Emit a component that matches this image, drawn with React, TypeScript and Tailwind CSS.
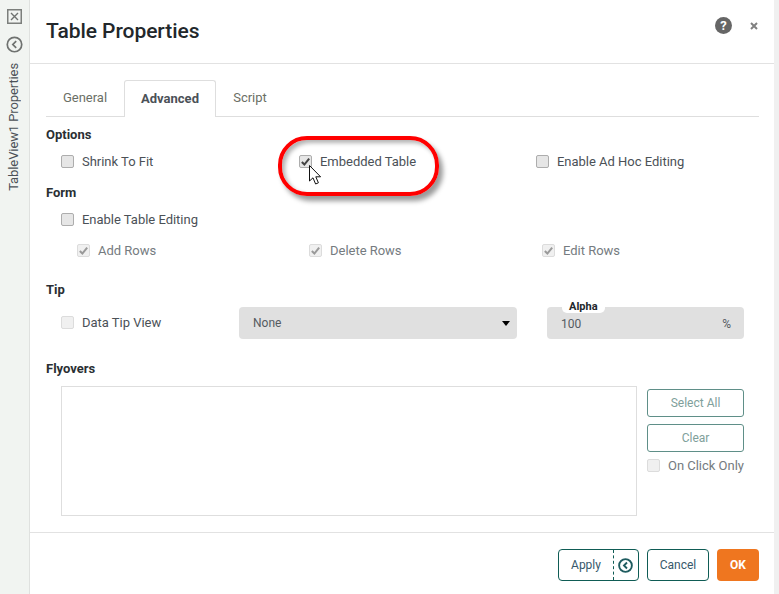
const roboto = "font-['Roboto',sans-serif]";

const Box = ({ checked = false, faded = false }: { checked?: boolean; faded?: boolean }) => (
  <span className={`flex h-[13px] w-[13px] shrink-0 items-center justify-center rounded-[2px] border ${faded ? "border-[#dcdcdc] bg-[#f0f0f0]" : "border-[#adadad] bg-[#e6e6e6]"}`}>
    {checked && (
      <svg viewBox="0 0 12 12" className="h-[11px] w-[11px]">
        <path d="M2 6.5 L4.8 9.3 L10 2.8" fill="none" stroke={faded ? "#9a9a9a" : "#444"} strokeWidth="2.2" />
      </svg>
    )}
  </span>
);

const Check = ({ label, checked, faded, gap = "gap-2", className = "" }: { label: string; checked?: boolean; faded?: boolean; gap?: string; className?: string }) => (
  <div className={`flex items-center ${gap} ${className}`}>
    <Box checked={checked} faded={faded} />
    <span className={`text-[13px] leading-none tracking-[-0.02px] ${faded ? "text-[#757b80]" : "text-[#4b5157]"}`}>{label}</span>
  </div>
);

const SectionLabel = ({ children, className = "" }: { children: string; className?: string }) => (
  <div className={`text-[13px] font-bold leading-none text-[#2a2f33] ${className}`}>{children}</div>
);

const BackIcon = ({ size, color, width = 1.6 }: { size: number; color: string; width?: number }) => (
  <svg width={size} height={size} viewBox="0 0 16 16">
    <circle cx="8" cy="8" r="6.8" fill="none" stroke={color} strokeWidth={width} />
    <path d="M9.6 4.8 L6.4 8 L9.6 11.2" fill="none" stroke={color} strokeWidth={width} />
  </svg>
);

export default function App() {
  return (
    <div className={`relative flex h-[594px] w-[779px] overflow-hidden bg-white ${roboto}`}>
      {/* collapsed side panel */}
      <aside className="flex w-[30px] shrink-0 flex-col items-center border-r border-[#dfe1df] bg-[#f1f4f1] pt-[9px]">
        <svg width="15" height="15" viewBox="0 0 15 15">
          <rect x="0.75" y="0.75" width="13.5" height="13.5" fill="none" stroke="#7c7f7c" strokeWidth="1.5" />
          <path d="M4 4 L11 11 M11 4 L4 11" stroke="#6f7270" strokeWidth="1.4" />
        </svg>
        <div className="mt-[12px] flex">
          <BackIcon size={17} color="#6f7270" />
        </div>
        <div className="mr-[2px] mt-[10px] rotate-180 text-[13px] leading-none tracking-[-0.1px] text-[#4b5157] [writing-mode:vertical-rl]">TableView1 Properties</div>
      </aside>

      <main className="flex w-[744px] shrink-0 flex-col">
        <header className="flex h-[64px] shrink-0 items-center justify-between border-b border-[#e2e2e2] pl-4 pr-4">
          <h1 className="pb-[1px] text-[21px] font-medium leading-none tracking-[-0.05px] text-[#22272b]">Table Properties</h1>
          <div className="mb-[12px] flex items-center gap-[18px]">
            <span className="flex h-[17px] w-[17px] items-center justify-center rounded-full bg-[#666] text-[13px] font-bold leading-none text-white">?</span>
            <svg width="8" height="8" viewBox="0 0 8 8">
              <path d="M1 1 L7 7 M7 1 L1 7" stroke="#808080" strokeWidth="2" />
            </svg>
          </div>
        </header>

        <div className="flex-1 pl-4 pr-[15px] pt-[16px]">
          <nav className="flex h-[37px] items-end border-b border-[#dedede] text-[13px]">
            <div className="flex h-[36px] w-[78px] items-center justify-center text-[#6b6f66]">General</div>
            <div className="-mb-px flex h-[37px] w-[92px] items-center justify-center rounded-t-[3px] border border-b-0 border-[#dedede] bg-white font-bold text-[#4b5157]">Advanced</div>
            <div className="flex h-[36px] w-[68px] items-center justify-center text-[#6b6f66]">Script</div>
          </nav>

          <SectionLabel className="mt-[11px]">Options</SectionLabel>
          <div className="mt-[14px] grid h-[13px] grid-cols-[238px_237px_1fr] pl-[15px]">
            <Check label="Shrink To Fit" />
            <Check label="Embedded Table" checked />
            <Check label="Enable Ad Hoc Editing" />
          </div>

          <SectionLabel className="mt-[18px]">Form</SectionLabel>
          <Check label="Enable Table Editing" className="mt-[14px] pl-[15px]" />
          <div className="mt-[18px] grid h-[13px] grid-cols-[232px_233px_1fr] pl-[31px]">
            <Check label="Add Rows" checked faded />
            <Check label="Delete Rows" checked faded />
            <Check label="Edit Rows" checked faded />
          </div>

          <SectionLabel className="mt-[26px]">Tip</SectionLabel>
          <div className="mt-[11px] flex h-[32px] items-center pl-[15px]">
            <Check label="Data Tip View" faded className="mb-[2px] w-[178px] [&>span:last-child]:text-[#4b5157]" />
            <div className="flex h-[32px] w-[278px] items-center justify-between rounded-[4px] bg-[#e0e0e0] pl-[14px] pr-[7px] text-[12px] text-[#555b60]">
              <span>None</span>
              <span className="h-0 w-0 border-x-[4px] border-t-[5px] border-x-transparent border-t-black" />
            </div>
            <div className="relative ml-[30px] flex h-[32px] w-[197px] items-center justify-between rounded-[4px] bg-[#e0e0e0] pl-[14px] pr-[13px] text-[12px] text-[#555b60]">
              <span className="pt-[1px]">100</span>
              <span className="pt-[1px]">%</span>
              <span className="absolute -top-[7px] left-[15px] rounded-b-[5px] bg-white px-[7px] text-[11px] font-bold leading-[13px] text-[#22272b]">Alpha</span>
            </div>
          </div>

          <SectionLabel className="mt-[23px]">Flyovers</SectionLabel>
          <div className="mt-[11px] flex items-start pl-[15px]">
            <div className="h-[130px] w-[576px] border border-[#dedede] bg-white" />
            <div className="ml-[10px] flex w-[97px] flex-col pt-[3px]">
              <button className="h-[28px] rounded-[3px] border border-[#5f8f88] text-[12px] text-[#80a09b]">Select All</button>
              <button className="mt-[7px] h-[28px] rounded-[3px] border border-[#5f8f88] text-[12px] text-[#80a09b]">Clear</button>
              <Check label="On Click Only" faded gap="gap-2" className="mt-[7px] whitespace-nowrap" />
            </div>
          </div>
        </div>

        <footer className="flex h-[62px] shrink-0 items-start justify-end gap-2 border-t border-[#e2e2e2] pr-[15px] pt-[16px] text-[12px]">
          <div className="flex h-[32px] w-[81px] items-center rounded-[4px] border border-[#0f5c55] text-[#37596b]">
            <span className="flex h-full w-[55px] items-center justify-center border-r border-dashed border-[#0f5c55]">Apply</span>
            <span className="flex flex-1 items-center justify-center pr-[2px]">
              <BackIcon size={15} color="#1f5c60" width={2} />
            </span>
          </div>
          <button className="h-[32px] w-[62px] rounded-[4px] border border-[#0f5c55] text-[#37596b]">Cancel</button>
          <button className="h-[32px] w-[42px] rounded-[4px] bg-[#ef761f] font-bold text-white">OK</button>
        </footer>
      </main>

      <div className="flex-1 bg-[#f0f0f0]" />

      {/* callout over the Embedded Table option */}
      <div className="absolute left-[278px] top-[136px] h-[60px] w-[161px] rounded-[29px] border-[4px] border-[#ff0000] shadow-[4px_5px_5px_rgba(0,0,0,0.4),inset_3px_3px_4px_rgba(0,0,0,0.3)]" />
      <svg className="absolute left-[309px] top-[165px]" width="13" height="21" viewBox="0 0 13 21">
        <path d="M0.5 0.5 V16 L4 12.8 L6.6 19 L9.4 17.8 L6.8 11.8 H11.6 Z" fill="#fff" stroke="#111" strokeWidth="1" />
      </svg>
    </div>
  );
}
